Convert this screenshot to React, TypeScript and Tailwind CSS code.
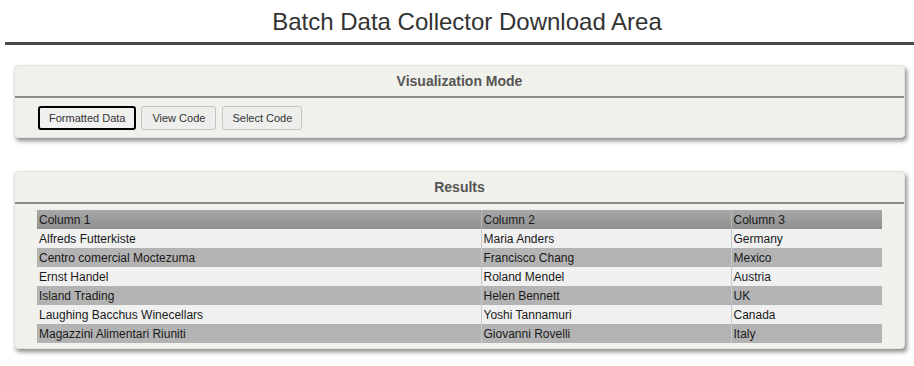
const rows = [
  ["Alfreds Futterkiste", "Maria Anders", "Germany"],
  ["Centro comercial Moctezuma", "Francisco Chang", "Mexico"],
  ["Ernst Handel", "Roland Mendel", "Austria"],
  ["Island Trading", "Helen Bennett", "UK"],
  ["Laughing Bacchus Winecellars", "Yoshi Tannamuri", "Canada"],
  ["Magazzini Alimentari Riuniti", "Giovanni Rovelli", "Italy"],
];

const Panel = ({ title, children }: { title: string; children: React.ReactNode }) => (
  <div className="ml-[14px] mr-[9px] rounded-[4px] border border-[#e2e2de] bg-[#f1f1ec] shadow-[2px_3px_4px_rgba(0,0,0,0.45)]">
    <div className="flex h-[32px] items-center justify-center border-b-2 border-[#8c8c8c] text-[14px] font-bold text-[#555]">
      {title}
    </div>
    {children}
  </div>
);

export default function App() {
  return (
    <div className="min-h-[366px] bg-white font-['Liberation_Sans',Arial,sans-serif] text-[#222]">
      <h1 className="pl-[20px] pt-[6px] text-center text-[24px] leading-[32px] text-[#333]">
        Batch Data Collector Download Area
      </h1>
      <div className="ml-[5px] mt-[4px] h-[3px] bg-[#4a4a4a]" />

      <div className="mt-[20px]">
        <Panel title="Visualization Mode">
          <div className="flex gap-[5px] pb-[7px] pl-[23px] pr-[24px] pt-[8px]">
            <button className="h-[24px] rounded-[3px] border-2 border-black bg-[#f0f0ef] px-[9px] text-[11px] text-[#333]">
              Formatted Data
            </button>
            <button className="h-[24px] rounded-[3px] border border-[#c4c4c4] bg-[#eeeeec] px-[10px] text-[11px] text-[#333]">
              View Code
            </button>
            <button className="ml-[1px] h-[24px] rounded-[3px] border border-[#c4c4c4] bg-[#eeeeec] px-[9px] text-[11px] text-[#333]">
              Select Code
            </button>
          </div>
        </Panel>
      </div>

      <div className="mt-[33px]">
        <Panel title="Results">
          <div className="px-[22px] pb-[5px] pt-[6px]">
            <table className="w-full border-collapse text-[12px] text-[#1a1a1a]">
              <thead>
                <tr className="h-[19px] bg-[linear-gradient(#a8a8a8,#8f8f8f)]">
                  <td className="w-[444px] pl-[2px]">Column 1</td>
                  <td className="w-[250px] border-l border-[#b8b8b8] pl-[2px]">Column 2</td>
                  <td className="border-l border-[#b8b8b8] pl-[2px]">Column 3</td>
                </tr>
              </thead>
              <tbody>
                {rows.map((r, i) => (
                  <tr key={i} className={`h-[19px] ${i % 2 === 0 ? "bg-[#f0f0f0]" : "bg-[#b3b3b3]"}`}>
                    <td className="pl-[2px]">{r[0]}</td>
                    <td className="border-l border-[#c8c8c8] pl-[2px]">{r[1]}</td>
                    <td className="border-l border-[#c8c8c8] pl-[2px]">{r[2]}</td>
                  </tr>
                ))}
              </tbody>
            </table>
          </div>
        </Panel>
      </div>
    </div>
  );
}
